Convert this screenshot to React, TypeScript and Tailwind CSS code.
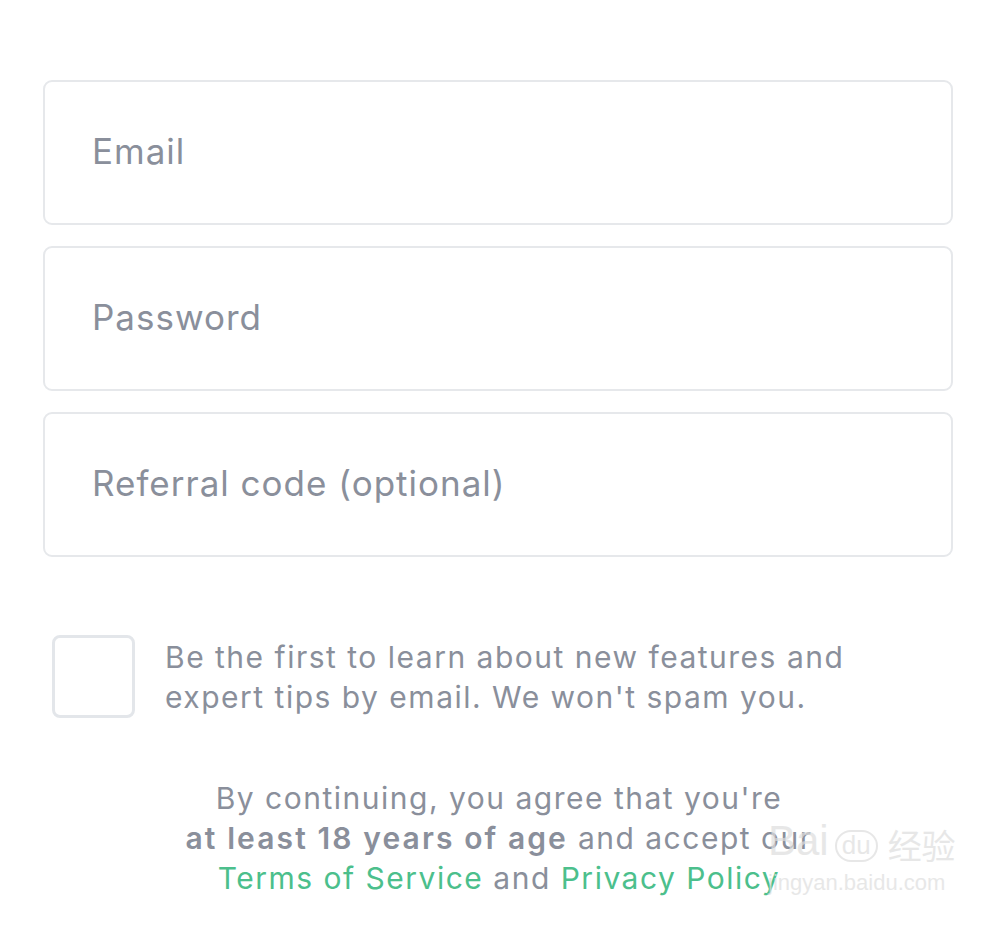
import React from 'react';

const fields = ['Email', 'Password', 'Referral code (optional)'];

export default function App() {
  return (
    <div className="min-h-[927px] w-[1000px] bg-white font-['Inter',sans-serif] text-[#8a8f9b] relative">
      <div className="pl-[43px] pr-[47px] pt-[80px] flex flex-col gap-[21px]">
        {fields.map((f) => (
          <div
            key={f}
            className="h-[145px] rounded-[9px] border-2 border-[#e6e8eb] flex items-center pl-[47px] text-[35px] tracking-[1px] pb-[2px]"
          >
            {f}
          </div>
        ))}
      </div>

      <div className="flex items-start pl-[52px] mt-[78px]">
        <div className="w-[83px] h-[83px] rounded-[8px] border-[3px] border-[#e3e6ea] shrink-0" />
        <p className="ml-[30px] text-[30px] leading-[40px] tracking-[1.5px] mt-[2px]">
          Be the first to learn about new features and
          <br />
          expert tips by email. We won't spam you.
        </p>
      </div>

      <p className="mt-[60px] text-center text-[30px] leading-[40px] tracking-[1.5px] pr-[2px]">
        By continuing, you agree that you're
        <br />
        <span className="font-semibold tracking-[2.1px]">at least 18 years of age</span> and accept our
        <br />
        <span className="text-[#4cbf8c]">Terms of Service</span> and{' '}
        <span className="text-[#4cbf8c]">Privacy Policy</span>
      </p>

      <div className="absolute left-[768px] top-[820px] text-[#dedede] opacity-70 select-none pointer-events-none">
        <div className="flex items-end gap-[6px] font-['Liberation_Sans',sans-serif] leading-none">
          <span className="text-[42px]">Bai</span>
          <span className="rounded-full border-2 border-[#dedede] px-[5px] pb-[2px] text-[26px]">du</span>
          <span className="font-['Noto_Sans_CJK_SC',sans-serif] text-[34px] ml-[4px]">经验</span>
        </div>
        <div className="text-[22px] mt-[4px] font-['Liberation_Sans',sans-serif]">jingyan.baidu.com</div>
      </div>
    </div>
  );
}
